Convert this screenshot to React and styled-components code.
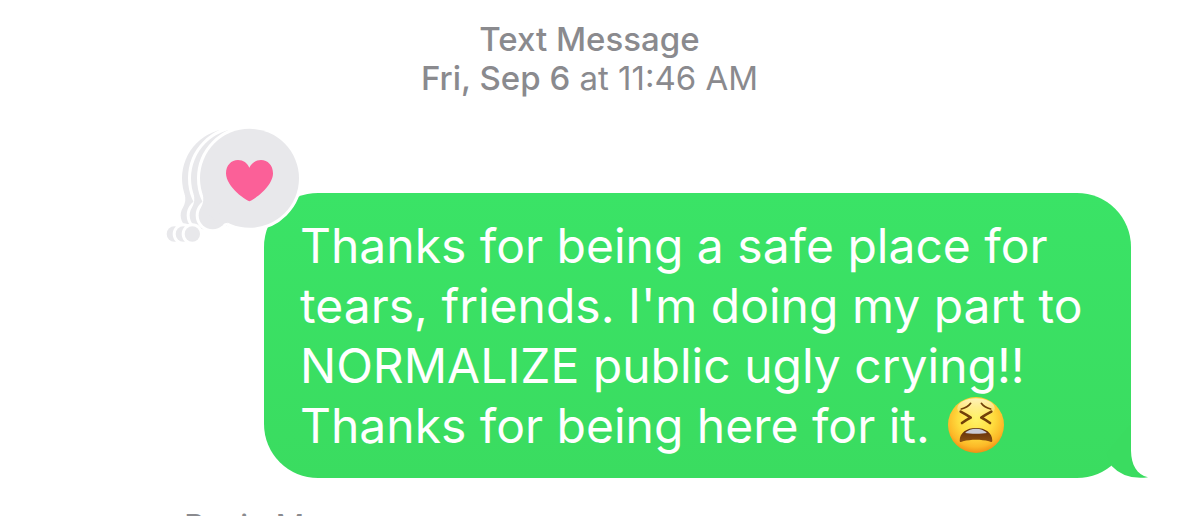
import React from "react";
import styled, { createGlobalStyle } from "styled-components";

const GlobalStyle = createGlobalStyle`
  * { box-sizing: border-box; }
  html, body { margin: 0; height: 100%; background: #fff; overflow: hidden; }
  body { font-family: Inter, "Liberation Sans", sans-serif; }
`;

const Thread = styled.main`
  display: flex;
  flex-direction: column;
`;

const Stamp = styled.header`
  padding-top: 20px;
  text-align: center;
  color: #8a8a8e;
  font-size: 33px;
  line-height: 39px;
`;

const StampLine = styled.p`
  margin: 0;
`;

const Strong = styled.span`
  font-weight: 500;
`;

const Bubble = styled.article`
  position: relative;
  margin: 95px 48px 0 264px;
  padding: 23px 36px 22px;
  border-radius: 54px;
  background: linear-gradient(#3ae366, #3adc60);
  color: #fff;
`;

const Message = styled.p`
  margin: 0;
  font-size: 48px;
  line-height: 60px;
`;

const TapbackIcon = styled.svg`
  position: absolute;
  left: -109px;
  top: -78px;
  width: 160px;
  height: 140px;
`;

const Tail = styled.svg`
  position: absolute;
  right: -39px;
  bottom: -17px;
  width: 100px;
  height: 75px;
`;

const EmojiIcon = styled.svg`
  width: 58px;
  height: 58px;
  margin: -8px 0 -8px 4px;
  vertical-align: -3px;
`;

const Sender = styled.p`
  margin: 0;
  padding: 29px 0 0 184px;
  color: #8a8a8e;
  font-size: 32px;
  line-height: 39px;
`;

function Thought({ shift }) {
  return (
    <g transform={`translate(${shift} 0)`}>
      <g fill="#fff" stroke="#fff" strokeWidth="18">
        <circle cx="283.5" cy="190" r="148.5" />
        <circle cx="173" cy="301" r="42" />
        <circle cx="112" cy="357" r="23" />
      </g>
      <g fill="#e8e8eb">
        <circle cx="283.5" cy="190" r="148.5" />
        <circle cx="173" cy="301" r="42" />
        <path d="M143 238Q149 257 138 278L200 334Q208 320 220 325Z" />
        <circle cx="112" cy="357" r="23" />
      </g>
    </g>
  );
}

function Tapback() {
  return (
    <TapbackIcon viewBox="0 0 480 420" role="img" aria-label="Three heart reactions">
      <Thought shift={-54} />
      <Thought shift={-27} />
      <Thought shift={0} />
      <path
        fill="#fb6098"
        d="M283 259C277 259 213 217 213 175C213 151 229 135 249 135C265 135 277 144 283 158C290 144 302 135 318 135C338 135 354 151 354 175C354 217 290 259 283 259Z"
      />
    </TapbackIcon>
  );
}

function TiredFace() {
  return (
    <EmojiIcon viewBox="37 35 174 174" role="img" aria-label="Tired face">
      <defs>
        <radialGradient id="skin" cx="50%" cy="38%" r="64%">
          <stop offset="0" stopColor="#fff36a" />
          <stop offset="0.5" stopColor="#ffdc3e" />
          <stop offset="0.8" stopColor="#fcb827" />
          <stop offset="1" stopColor="#ee8712" />
        </radialGradient>
        <linearGradient id="shine" x1="0" y1="0" x2="0" y2="1">
          <stop offset="0" stopColor="#fff" stopOpacity="0.65" />
          <stop offset="1" stopColor="#fff" stopOpacity="0" />
        </linearGradient>
        <linearGradient id="mouth" x1="0" y1="0" x2="0" y2="1">
          <stop offset="0" stopColor="#5c2b0b" />
          <stop offset="1" stopColor="#8a4f10" />
        </linearGradient>
      </defs>
      <circle cx="124" cy="122" r="84" fill="url(#skin)" />
      <ellipse cx="124" cy="72" rx="56" ry="30" fill="url(#shine)" />
      <g fill="none" stroke="#714009" strokeLinecap="round" strokeLinejoin="round">
        <path d="M80 74Q99 70 108 57M168 74Q149 70 140 57" strokeWidth="5" />
        <path d="M78 82Q97 92 108 100Q94 107 82 116M170 82Q151 92 140 100Q154 107 166 116" strokeWidth="8" />
      </g>
      <path fill="url(#mouth)" d="M75 169C75 145 96 131 124 131C152 131 173 145 173 169C173 174 168 173 163 171C139 165 109 165 85 171C80 173 75 174 75 169Z" />
      <path fill="#c9cbd6" d="M91 146C107 129 141 129 157 146C143 149 105 149 91 146Z" />
    </EmojiIcon>
  );
}

export default function App() {
  return (
    <>
      <GlobalStyle />
      <Thread>
        <Stamp>
          <StampLine><Strong>Text Message</Strong></StampLine>
          <StampLine><Strong>Fri, Sep 6</Strong> at 11:46 AM</StampLine>
        </Stamp>
        <Bubble>
          <Tail viewBox="0 0 300 225" aria-hidden="true">
            <path fill="#3adc60" d="M183 12V92C184 135 200 163 234 172Q165 181 125 138L110 100Z" />
          </Tail>
          <Message>
            Thanks for being a safe place for tears, friends. I'm doing my part to
            NORMALIZE public ugly crying!! Thanks for being here for it. <TiredFace />
          </Message>
          <Tapback />
        </Bubble>
        <Sender>Rosie M</Sender>
      </Thread>
    </>
  );
}
